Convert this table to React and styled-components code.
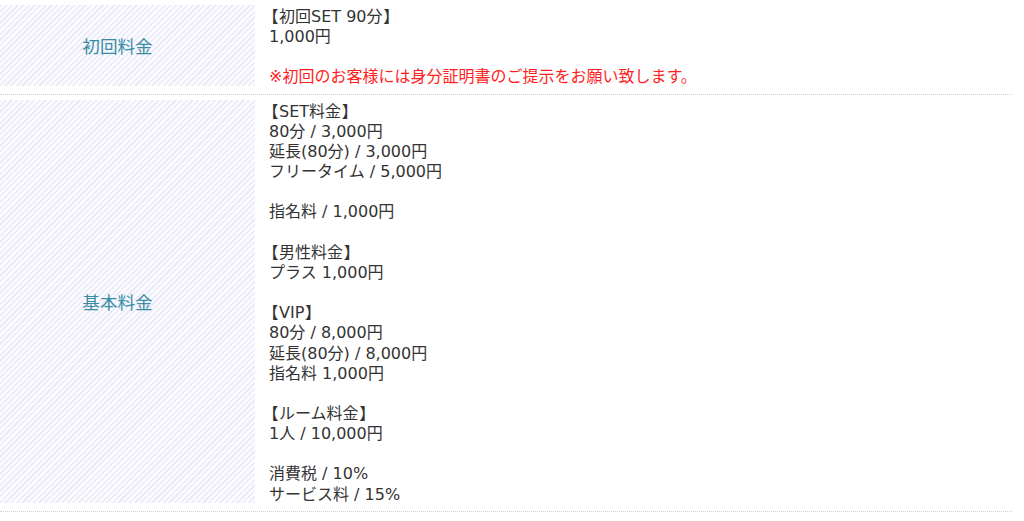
import React from "react";
import styled, { createGlobalStyle } from "styled-components";

const Global = createGlobalStyle`
  html, body { margin: 0; padding: 0; background: #fff; }
  body { font-family: "DejaVu Sans", "Noto Sans CJK JP", sans-serif; }
`;

const Table = styled.div`
  width: 1012px;
  display: flex;
  flex-direction: column;
`;

const Row = styled.div`
  display: flex;
  align-items: stretch;
  padding: 5px 0 8px;
  border-bottom: 1px dotted #cfcfcf;
`;

const Label = styled.div`
  flex: 0 0 255px;
  display: flex;
  align-items: center;
  justify-content: center;
  padding-right: 20px;
  box-sizing: border-box;
  font-family: "Noto Sans CJK JP", sans-serif;
  font-size: 17.6px;
  color: #3a8ca6;
  background: repeating-linear-gradient(
    -45deg,
    #e9ecf8 0px,
    #e9ecf8 1.6px,
    #fbfbfe 1.6px,
    #fbfbfe 4px
  );
`;

const Content = styled.div`
  flex: 1;
  padding-left: 14px;
  font-size: 16px;
  line-height: 20.16px;
  color: #333;
`;

const Line = styled.div`
  height: 20.16px;
  padding-top: 2px;
  box-sizing: border-box;
  white-space: nowrap;
  color: ${(p) => (p.$note ? "#ff1e1e" : "inherit")};
  & > span {
    line-height: 0;
  }
`;

const Bracket = styled.span`
  font-family: "Noto Sans CJK JP", sans-serif;
  font-feature-settings: "palt" 1;
  margin: 0 1px;
`;

const renderText = (t) => {
  const parts = t.split(/([【】])/);
  return parts.map((p, i) =>
    p === "【" || p === "】" ? <Bracket key={i}>{p}</Bracket> : p
  );
};

const rows = [
  {
    label: "初回料金",
    lines: [
      "【初回SET 90分】",
      "1,000円",
      "",
      { note: "※初回のお客様には身分証明書のご提示をお願い致します。" },
    ],
  },
  {
    label: "基本料金",
    lines: [
      "【SET料金】",
      "80分 / 3,000円",
      "延長(80分) / 3,000円",
      "フリータイム / 5,000円",
      "",
      "指名料 / 1,000円",
      "",
      "【男性料金】",
      "プラス 1,000円",
      "",
      "【VIP】",
      "80分 / 8,000円",
      "延長(80分) / 8,000円",
      "指名料 1,000円",
      "",
      "【ルーム料金】",
      "1人 / 10,000円",
      "",
      "消費税 / 10%",
      "サービス料 / 15%",
    ],
  },
];

export default function App() {
  return (
    <>
      <Global />
      <Table>
        {rows.map((r) => (
          <Row key={r.label}>
            <Label>{r.label}</Label>
            <Content>
              {r.lines.map((l, i) =>
                typeof l === "string" ? (
                  <Line key={i}>{l ? renderText(l) : "\u00a0"}</Line>
                ) : (
                  <Line key={i} $note>
                    {l.note}
                  </Line>
                )
              )}
            </Content>
          </Row>
        ))}
      </Table>
    </>
  );
}
